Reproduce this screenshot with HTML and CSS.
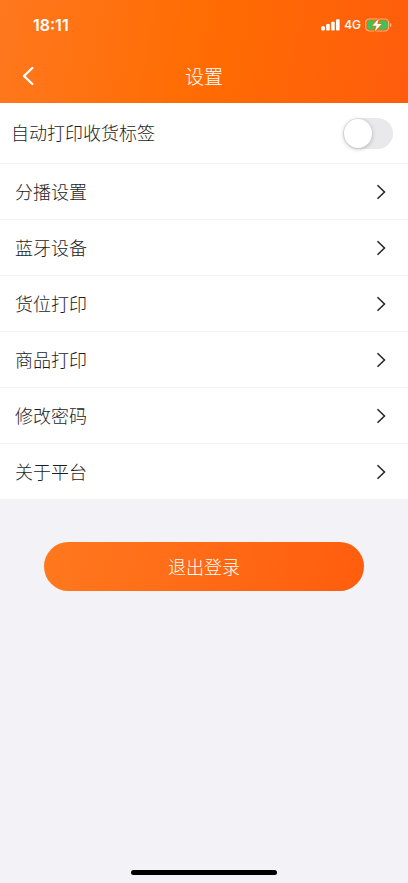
FILE: index.html
```html
<!DOCTYPE html>
<html lang="zh-CN">
<head>
<meta charset="utf-8">
<meta name="viewport" content="width=device-width, initial-scale=1">
<title>设置</title>
<link rel="stylesheet" href="styles.css">
</head>
<body>
<header class="header">
  <div class="status">
    <span class="time">18:11</span>
    <div class="indicators">
      <svg class="signal" width="19" height="12" viewBox="0 0 19 12" aria-hidden="true">
        <rect x="0.3" y="7.3" width="3.6" height="4.2" rx="1"/>
        <rect x="5.2" y="5" width="3.6" height="6.5" rx="1"/>
        <rect x="10.1" y="2.7" width="3.6" height="8.8" rx="1"/>
        <rect x="15" y="0.3" width="3.6" height="11.2" rx="1"/>
      </svg>
      <span class="network">4G</span>
      <svg class="battery" width="27" height="14" viewBox="0 0 27 14" aria-hidden="true">
        <rect x="0.7" y="1" width="22.8" height="12" rx="3.6" fill="none" stroke="#ffb27c" stroke-width="1.2"/>
        <path d="M25 5v4.2c.9-.4 1.4-1.2 1.4-2.1S25.9 5.400 25 5z" fill="#ffb27c"/>
        <rect x="2.3" y="2.6" width="19.600" height="8.8" rx="2" fill="#34c759"/>
        <path d="M13.800.6 7.400 7.800h4.200L9.800 13.500l6.800-7.400h-4.300z" fill="#fff" stroke="#ff6809" stroke-width="1.8" stroke-linejoin="round" paint-order="stroke"/>
      </svg>
    </div>
  </div>
  <nav class="navbar">
    <button class="back" type="button" aria-label="返回">
      <svg width="12" height="20" viewBox="0 0 12 20" aria-hidden="true"><path d="M10.300 2 2 10l8.300 8"/></svg>
    </button>
    <h1 class="title">设置</h1>
  </nav>
</header>
<main>
  <div class="list">
    <label class="row row-switch" for="auto-print">
      <span class="label">自动打印收货标签</span>
      <input class="switch" id="auto-print" type="checkbox" role="switch">
    </label>
    <a class="row" href="#sorting"><span class="label">分播设置</span><svg class="chevron" viewBox="0 0 10 16" aria-hidden="true"><path d="m1.500 1.300 7 6.700-7 6.700"/></svg></a>
    <a class="row" href="#bluetooth"><span class="label">蓝牙设备</span><svg class="chevron" viewBox="0 0 10 16" aria-hidden="true"><path d="m1.500 1.300 7 6.700-7 6.700"/></svg></a>
    <a class="row" href="#location"><span class="label">货位打印</span><svg class="chevron" viewBox="0 0 10 16" aria-hidden="true"><path d="m1.500 1.300 7 6.700-7 6.700"/></svg></a>
    <a class="row" href="#goods"><span class="label">商品打印</span><svg class="chevron" viewBox="0 0 10 16" aria-hidden="true"><path d="m1.500 1.300 7 6.700-7 6.700"/></svg></a>
    <a class="row" href="#password"><span class="label">修改密码</span><svg class="chevron" viewBox="0 0 10 16" aria-hidden="true"><path d="m1.500 1.300 7 6.700-7 6.700"/></svg></a>
    <a class="row" href="#about"><span class="label">关于平台</span><svg class="chevron" viewBox="0 0 10 16" aria-hidden="true"><path d="m1.500 1.300 7 6.700-7 6.700"/></svg></a>
  </div>
  <button class="logout" type="button">退出登录</button>
</main>
<div class="home-bar"></div>
</body>
</html>
```
FILE: styles.css
```css
* {
  box-sizing: border-box;
}

body {
  margin: 0;
  min-height: 100vh;
  display: flex;
  flex-direction: column;
  background: #f2f2f7;
  color: #1c1c1e;
  font-family: "Noto Sans CJK SC", sans-serif;
  font-size: 18px;
  font-weight: 300;
  line-height: 24px;
}

.header {
  background: linear-gradient(100deg, #ff781e 0%, #ff6c02 50%, #ff5d0d 100%);
  color: #fff;
}

.status {
  display: flex;
  align-items: center;
  justify-content: space-between;
  height: 48px;
  padding: 2px 16px 0 33px;
  font-family: Inter, sans-serif;
}

.time {
  font-size: 16px;
  font-weight: 600;
}

.indicators {
  display: flex;
  align-items: center;
  gap: 4px;
}

.signal {
  fill: #fff;
}

.network {
  font-size: 12px;
  font-weight: 500;
}

.navbar {
  display: grid;
  grid-template-columns: 55px 1fr 55px;
  align-items: center;
  height: 55px;
}

.back {
  display: flex;
  justify-content: center;
  padding: 8px 0;
  border: 0;
  background: none;
}

.back path {
  fill: none;
  stroke: #fff;
  stroke-width: 2.4;
  stroke-linecap: round;
  stroke-linejoin: round;
}

.title {
  grid-column: 2;
  margin: 0;
  font-size: 19px;
  font-weight: 300;
  text-align: center;
}

.list {
  background: #fff;
}

.row {
  display: flex;
  align-items: center;
  justify-content: space-between;
  height: 56px;
  padding: 0 22px 0 15px;
  border-bottom: 1px solid #f2f2f4;
  color: inherit;
  text-decoration: none;
}

.row:last-child {
  height: 55px;
  border-bottom: 0;
}

.row-switch {
  height: 61px;
  padding: 0 15px 0 11px;
}

.label {
  padding-bottom: 2px;
}

.chevron {
  width: 10px;
  height: 16px;
  fill: none;
  stroke: #222;
  stroke-width: 1.5;
}

.switch {
  appearance: none;
  display: flex;
  width: 50px;
  height: 31px;
  margin: 0;
  padding: 1px;
  border-radius: 16px;
  background: #e9e9eb;
}

.switch::before {
  content: "";
  width: 28px;
  height: 29px;
  border-radius: 50%;
  background: #fff;
  box-shadow: 0 1px 4px rgba(0, 0, 0, 0.25);
}

.switch:checked {
  justify-content: flex-end;
  background: #ff6c02;
}

.logout {
  display: block;
  width: calc(100% - 88px);
  height: 49px;
  margin: 43px auto 0;
  padding: 0 0 2px;
  border: 0;
  border-radius: 25px;
  background: linear-gradient(100deg, #ff781e, #ff5d0d);
  color: #fff;
  font: inherit;
}

.home-bar {
  width: 146px;
  height: 5px;
  margin: auto auto 8px;
  border-radius: 3px;
  background: #000;
}
```
